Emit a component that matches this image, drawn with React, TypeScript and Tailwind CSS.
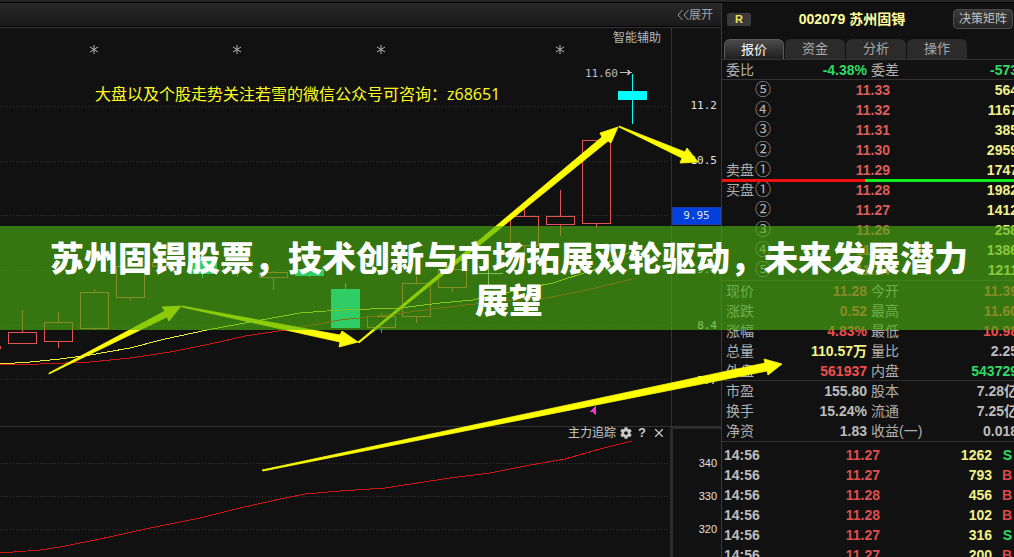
import clsx from "clsx";
import { X } from "lucide-react";
import { FaCog } from "react-icons/fa";

const RED = "#e25555";

type Candle = {
  x: number;
  high: number;
  top: number;
  bottom: number;
  low: number;
  down?: boolean;
};

const candles: Candle[] = [
  { x: -14, high: 346, top: 346, bottom: 348, low: 348 },
  { x: 22, high: 310, top: 332, bottom: 343, low: 343 },
  { x: 58, high: 312, top: 322, bottom: 341, low: 348 },
  { x: 94, high: 289, top: 292, bottom: 328, low: 330 },
  { x: 130, high: 266, top: 266, bottom: 297, low: 301 },
  { x: 166, high: 260, top: 262, bottom: 266, low: 268 },
  { x: 202, high: 258, top: 260, bottom: 273, low: 278, down: true },
  { x: 237, high: 262, top: 264, bottom: 270, low: 277 },
  { x: 273, high: 271, top: 272, bottom: 277, low: 290 },
  { x: 309, high: 267, top: 269, bottom: 275, low: 277, down: true },
  { x: 345, high: 283, top: 289, bottom: 327, low: 327, down: true },
  { x: 381, high: 313, top: 316, bottom: 327, low: 333 },
  { x: 416, high: 276, top: 283, bottom: 316, low: 323 },
  { x: 452, high: 252, top: 269, bottom: 287, low: 292 },
  { x: 524, high: 208, top: 216, bottom: 245, low: 252 },
  { x: 560, high: 190, top: 216, bottom: 224, low: 236 },
  { x: 596, high: 140, top: 140, bottom: 223, low: 228 },
  { x: 632, high: 74, top: 91, bottom: 99, low: 124, down: true },
];

const ma5 =
  "0,364 30,362 60,359 90,355 130,348 165,339 207,330 250,322 300,313 340,310 400,308 440,303 473,300 527,288 553,283 593,270 630,252";
const ma10 =
  "0,365 40,364 90,362 130,358 170,352 210,344 245,336 285,330 340,320 387,315 440,308 493,302 547,298 587,290 632,279";
const tracking =
  "0,553 40,550 60,547 100,539 150,528 200,518 240,508 280,499 305,494 340,491 385,488 450,478 490,473 530,465 565,459 600,449 632,441";

const arrows = [
  "49,373 165,311 162,307 181,306 169,321 167,317 49,374",
  "182,306 340,335 342,331 358,342 339,347 340,342 182,307",
  "358,342 602,137 600,133 618,127 611,143 608,141 359,343",
  "619,126 685,152 687,148 698,162 680,163 682,158 619,127",
  "262,470 765,363 764,359 782,364 768,375 767,371 263,471",
];

const priceScale = ["11.2", "10.5", "9.95", "9.1", "8.4", "7.7"];
const trackScale = ["340", "330", "320"];

const tabs = ["报价", "资金", "分析", "操作"];

const asks = [
  ["", "⑤", "11.33", "564"],
  ["", "④", "11.32", "1167"],
  ["", "③", "11.31", "385"],
  ["", "②", "11.30", "2959"],
  ["卖盘", "①", "11.29", "1747"],
];

const bids = [
  ["买盘", "①", "11.28", "1982"],
  ["", "②", "11.27", "1412"],
  ["", "③", "11.26", "258"],
  ["", "④", "11.25", "1386"],
  ["", "⑤", "11.24", "1211"],
];

const red = "text-[#f04e4e]";
const green = "text-[#2edc66]";
const yellow = "text-[#f2f28a]";
const gray = "text-[#bdbdbd]";

const ratio = [["委比", "-4.38%", green, "委差", "-573", green]];

const quote = [
  ["现价", "11.28", red, "今开", "11.39", red],
  ["涨跌", "0.52", red, "最高", "11.60", red],
  ["涨幅", "4.83%", red, "最低", "10.98", red],
  ["总量", "110.57万", yellow, "量比", "2.25", gray],
  ["外盘", "561937", red, "内盘", "543729", green],
];

const basics = [
  ["市盈", "155.80", gray, "股本", "7.28亿", gray],
  ["换手", "15.24%", gray, "流通", "7.25亿", gray],
  ["净资", "1.83", gray, "收益(一)", "0.018", gray],
];

const trades = [
  ["14:56", "11.27", "1262", "S"],
  ["14:56", "11.27", "793", "B"],
  ["14:56", "11.28", "456", "B"],
  ["14:56", "11.28", "102", "B"],
  ["14:56", "11.27", "316", "S"],
  ["14:56", "11.27", "200", "B"],
];

function Chart() {
  return (
    <svg className="absolute left-0 top-0 h-[557px] w-[1014px]" viewBox="0 0 1014 557" shapeRendering="crispEdges">
      {[106, 161, 215, 270, 325, 379, 463, 496, 529].map((y) => (
        <line key={y} x1="1" x2="670" y1={y + 0.5} y2={y + 0.5} stroke="#333" strokeDasharray="1 2" />
      ))}
      {[94, 237, 381, 560].map((x) => (
        <path
          key={x}
          d={`M${x} 45v9M${x - 4} 47l8 5M${x - 4} 52l8-5`}
          stroke="#b8b8b8"
          shapeRendering="auto"
        />
      ))}
      {candles.map((c) => {
        const color = c.down ? "#00ffff" : RED;
        return (
          <g key={c.x} stroke={color}>
            <line x1={c.x + 0.5} x2={c.x + 0.5} y1={c.high} y2={c.top} />
            <line x1={c.x + 0.5} x2={c.x + 0.5} y1={c.bottom} y2={c.low} />
            <rect
              x={c.x - 13.5}
              y={c.top + 0.5}
              width="28"
              height={c.bottom - c.top}
              fill={c.down ? color : "none"}
            />
          </g>
        );
      })}
      <path d="M474 273.5h29M488.5 258v28" stroke="#e0e0e0" />
      <polyline points={ma5} fill="none" stroke="#f0f032" />
      <polyline points={ma10} fill="none" stroke="#d01616" />
      <polyline points={tracking} fill="none" stroke="#d01616" />
      <path d="M620 72.5h11M627 70l4 2.500-4 2.500" fill="none" stroke="#bdbdbd" />
      <path d="M590 412l6-6.500V416l-3-4z" fill="#f032d2" />
    </svg>
  );
}

function Arrows() {
  return (
    <svg className="pointer-events-none absolute left-0 top-0 h-[557px] w-[1014px]" viewBox="0 0 1014 557">
      {arrows.map((points) => (
        <polygon key={points} points={points} fill="#ffff00" stroke="#ffff00" strokeWidth="0.8" />
      ))}
    </svg>
  );
}

function BookTable({ rows, label }: { rows: string[][]; label: string }) {
  return (
    <table aria-label={label} className="w-[296px] table-fixed text-sm leading-5">
      <tbody>
        {rows.map(([side, level, price, volume]) => (
          <tr key={level} className="h-5 whitespace-nowrap">
            <td className="w-[33px] pl-1 text-[#b0b0b0]">{side}</td>
            <td className="w-5 text-base leading-5 text-[#b8b8b8]">{level}</td>
            <td className="w-[115px] text-right font-bold text-[#dd5c5c]">{price}</td>
            <td className="text-right font-bold text-[#f2f28a]">{volume}</td>
          </tr>
        ))}
      </tbody>
    </table>
  );
}

function StatTable({ rows, label }: { rows: string[][]; label: string }) {
  return (
    <table aria-label={label} className="w-[296px] table-fixed text-sm leading-5">
      <tbody>
        {rows.map(([a, av, ac, b, bv, bc]) => (
          <tr key={a} className="h-5 whitespace-nowrap">
            <td className="w-10 pl-1 text-[#b0b0b0]">{a}</td>
            <td className={clsx("w-[105px] text-right font-bold", ac)}>{av}</td>
            <td className="w-[74px] pl-1 text-[#b0b0b0]">{b}</td>
            <td className={clsx("text-right font-bold", bc)}>{bv}</td>
          </tr>
        ))}
      </tbody>
    </table>
  );
}

function QuotePanel() {
  return (
    <aside className="w-[293px] shrink-0 overflow-hidden border-l border-[#3a3a3a] bg-[#111]">
      <header className="flex h-8 items-center justify-between pl-[5px] pr-px">
        <span className="flex h-[13px] w-6 items-center justify-center rounded-xs bg-[#3a3a3a] text-[11px] font-bold text-[#f0e050]">
          R
        </span>
        <h2 className="text-sm font-bold text-[#ffff9c]">002079 苏州固锝</h2>
        <button className="h-5 w-[60px] rounded-sm border border-[#4a4a4a] bg-linear-to-b from-[#3a3a3a] to-[#262626] text-xs text-[#c4c4c4]">
          决策矩阵
        </button>
      </header>
      <nav className="mt-1 flex h-[21px] gap-px border-b border-[#333] pl-[2px]">
        {tabs.map((tab, i) => (
          <button
            key={tab}
            className={clsx(
              "w-[60px] rounded-t-md text-[13px] leading-5",
              i === 0
                ? "border border-b-0 border-[#5a5a5a] bg-linear-to-b from-[#4c4c4c] to-[#1e1e1e] text-white"
                : "bg-[#2b2b2b] text-[#a8a8a8]"
            )}
          >
            {tab}
          </button>
        ))}
      </nav>
      <div className="h-5 border-b border-[#333]">
        <StatTable rows={ratio} label="委比" />
      </div>
      <BookTable rows={asks} label="卖盘" />
      <div className="relative -mb-[2px] -mt-px flex h-[3px]">
        <div className="w-[143px] bg-[#f01010]" />
        <div className="flex-1 bg-[#10f020]" />
      </div>
      <BookTable rows={bids} label="买盘" />
      <div className="border-t border-[#333]">
        <StatTable rows={quote} label="行情" />
      </div>
      <div className="-mt-px border-t border-[#333]">
        <StatTable rows={basics} label="基本面" />
      </div>
      <div className="border-t border-[#333] pt-[3px]">
        <table aria-label="成交明细" className="w-full table-fixed text-sm font-bold leading-5">
          <tbody>
            {trades.map(([time, price, volume, side], i) => (
              <tr key={i} className="h-5">
                <td className="w-16 pl-[2px] text-[#bdbdbd]">{time}</td>
                <td className="w-[94px] text-right text-[#dd5050]">{price}</td>
                <td className="text-right text-[#f2f28a]">{volume}</td>
                <td className={clsx("w-[22px] pr-[2px] text-right", side === "S" ? "text-[#2edc66]" : "text-[#e04848]")}>
                  {side}
                </td>
              </tr>
            ))}
          </tbody>
        </table>
      </div>
    </aside>
  );
}

export default function App() {
  return (
    <div className="relative flex h-screen flex-col overflow-hidden bg-[#111] font-['Liberation_Sans','Noto_Sans_CJK_SC',sans-serif]">
      <div className="h-[3px] shrink-0 border-b border-black bg-[#262626]" />
      <div className="flex min-h-0 flex-1">
        <main className="flex min-w-0 flex-1 flex-col">
          <div className="flex h-6 shrink-0 items-center justify-end border-b border-black bg-linear-to-b from-[#282828] to-[#1a1a1a] pr-2">
            <button className="flex items-center text-xs text-[#a0a0a0]">
              <svg className="h-3 w-3" viewBox="0 0 12 12" fill="none" stroke="currentColor">
                <path d="M5.500 1L1 6l4.500 5M11.500 1L7 6l4.500 5" />
              </svg>
              展开
            </button>
          </div>
          <section className="flex h-[400px] shrink-0 border-y border-[#333]">
            <Chart />
            <div className="relative min-w-0 flex-1">
              <p className="pr-[10px] text-right text-xs leading-5 text-[#b8b8b8]">智能辅助</p>
              <p className="mt-4 pr-[53px] text-right font-['DejaVu_Sans_Mono',monospace] text-[11px] leading-5 text-[#bdbdbd]">
                11.60
              </p>
              <p className="pl-[95px] text-base leading-5 text-[#ffff20]">
                大盘以及个股走势关注若雪的微信公众号可咨询：
                <span className="font-['Open_Sans',sans-serif]">z68651</span>
              </p>
            </div>
            <div className="relative flex w-[50px] flex-col justify-between border-l border-[#333] pb-[35px] pt-[68px] font-['DejaVu_Sans_Mono',monospace] text-[11px] leading-5 text-[#e0e0e0]">
              {priceScale.map((p) => (
                <span
                  key={p}
                  className={p === "9.95" ? "border border-[#1c3fa8] bg-[#0040dc] text-center leading-4" : "pr-1 text-right"}
                >
                  {p}
                </span>
              ))}
            </div>
          </section>
          <section className="flex min-h-0 flex-1">
            <div className="relative min-w-0 flex-1">
              <div className="flex h-3 items-center justify-end gap-1 pr-1 text-[#c8c8c8]">
                <h3 className="text-xs font-normal">主力追踪</h3>
                <button aria-label="设置">
                  <FaCog size={12} />
                </button>
                <button className="w-3 text-[13px] font-bold leading-3">?</button>
                <button aria-label="关闭">
                  <X size={14} strokeWidth={2} />
                </button>
              </div>
            </div>
            <div className="relative w-[51px] border-l-3 border-t-2 border-[#2b2b2b] pr-1 pt-4 text-right text-[11px] text-[#e0e0e0]">
              {trackScale.map((p) => (
                <div key={p} className="h-[33px] leading-9">
                  {p}
                </div>
              ))}
            </div>
          </section>
        </main>
        <QuotePanel />
      </div>
      <Arrows />
      <div className="absolute inset-x-0 top-[226px] bg-[#4baf0f]/64 py-[10px] pl-11 pr-10">
        <h1 className="text-center font-['Noto_Sans_CJK_SC',sans-serif] text-[34px] font-black leading-[42px] text-white">
          苏州固锝股票，技术创新与市场拓展双轮驱动，未来发展潜力展望
        </h1>
      </div>
    </div>
  );
}
